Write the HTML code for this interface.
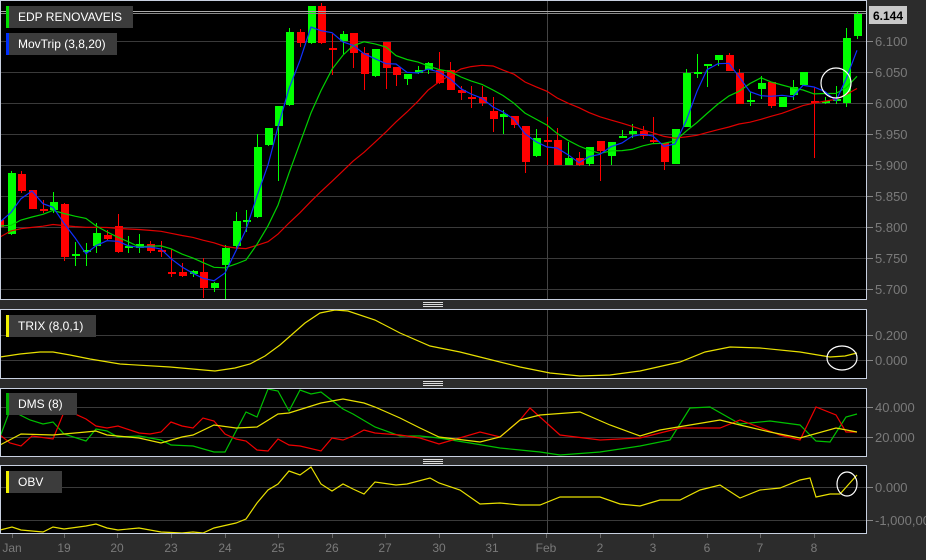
<!DOCTYPE html>
<html><head><meta charset="utf-8"><style>
html,body{margin:0;padding:0;background:#2c2c2c;width:926px;height:560px;overflow:hidden}
svg{display:block;font-family:"Liberation Sans",sans-serif}
</style></head><body>
<svg id="s" width="926" height="560" xmlns="http://www.w3.org/2000/svg">
<rect width="926" height="560" fill="#2c2c2c"/>
<rect x="0" y="0" width="867" height="300" fill="#000"/>
<rect x="0" y="309" width="867" height="69" fill="#000"/>
<rect x="0" y="388" width="867" height="68" fill="#000"/>
<rect x="0" y="465" width="867" height="69" fill="#000"/>
<g id="g"></g>
</svg>
<script>
var g=document.getElementById('g'),h='';
function L(x1,y1,x2,y2,c,w){h+='<line x1="'+x1+'" y1="'+y1+'" x2="'+x2+'" y2="'+y2+'" stroke="'+c+'" stroke-width="'+(w||1)+'"/>';}
function T(x,y,t,c,s,a,wt){h+='<text x="'+x+'" y="'+y+'" fill="'+c+'" font-size="'+s+'" text-anchor="'+(a||'start')+'" font-weight="'+(wt||'normal')+'">'+t+'</text>';}
function P(pts,c){var s='';for(var i=0;i<pts.length;i+=2)s+=pts[i]+','+pts[i+1]+' ';h+='<polyline points="'+s+'" fill="none" stroke="'+c+'" stroke-width="1.2"/>';}
// grids
[41,72,103,134,165,196,227,258,289].forEach(function(y){L(0,y+.5,867,y+.5,'#3a3a3a');});
[335,360].forEach(function(y){L(0,y+.5,867,y+.5,'#3a3a3a');});
[407,437].forEach(function(y){L(0,y+.5,867,y+.5,'#3a3a3a');});
[487,520].forEach(function(y){L(0,y+.5,867,y+.5,'#3a3a3a');});
L(547.5,0,547.5,300,'#444');L(547.5,309,547.5,378,'#444');L(547.5,388,547.5,456,'#444');L(547.5,465,547.5,534,'#444');
// candles: x, open, close, high, low (pixel y)
var C=[[11,234,173,171,235],[21,174,191,171,193],[32,190,209,190,209],[43,209,211,200,213],[53,210,202,192,213],[64,204,257,203,261],[75,256,254,242,266],[86,252,250,243,266],[96,246,233,223,253],[107,235,239,230,240],[118,226,252,214,253],[128,248,246,236,253],[139,248,244,234,253],[150,244,251,241,253],[161,250,252,241,257],[171,272,273,249,277],[182,272,276,263,277],[193,274,271,270,277],[203,272,288,258,298],[214,288,283,282,292],[225,265,248,245,299],[236,246,221,212,250],[246,222,220,210,232],[257,217,147,134,218],[268,145,128,128,146],[278,126,106,106,181],[289,105,32,28,106],[300,32,43,29,47],[311,43,6,6,44],[321,6,43,3,44],[332,48,49,34,75],[343,41,34,31,54],[353,33,53,33,68],[364,53,74,47,90],[375,76,49,49,77],[386,42,68,42,89],[396,67,75,67,86],[407,79,74,74,85],[418,73,70,66,74],[428,70,63,62,74],[439,70,83,52,84],[450,70,90,62,90],[461,90,93,86,100],[471,97,99,86,108],[482,97,103,86,106],[493,111,119,97,132],[503,117,114,110,134],[514,116,125,116,128],[525,126,162,126,173],[536,156,138,129,157],[547,140,141,117,165],[557,140,165,128,165],[568,165,158,142,165],[579,158,165,152,166],[589,164,147,147,166],[600,141,151,141,181],[611,156,142,142,165],[622,137,136,130,138],[632,134,131,124,138],[643,131,136,126,139],[653,140,141,117,143],[664,143,162,143,170],[675,164,129,129,164],[686,127,73,69,127],[697,73,72,54,78],[707,65,64,64,87],[718,60,55,55,66],[729,55,71,53,71],[739,73,104,69,104],[750,102,100,92,106],[761,89,83,76,99],[771,82,106,82,108],[782,107,97,97,107],[793,95,87,80,100],[803,85,72,72,85],[814,101,102,87,158],[825,103,101,97,104],[836,101,99,86,104],[846,103,38,28,107],[857,36,14,11,39]];
h+='<rect x="0" y="220" width="4" height="7" fill="#f00"/>';
C.forEach(function(c){var up=c[2]<=c[1],col=up?'#00ff00':'#ff0000';var t=Math.min(c[1],c[2]),b=Math.max(c[1],c[2]);L(c[0]+.5,c[3],c[0]+.5,c[4],col);h+='<rect x="'+(c[0]-3)+'" y="'+t+'" width="8" height="'+Math.max(2,b-t)+'" fill="'+col+'"/>';});
// MAs
var cl=C.map(function(c){return c[2];}),xs=C.map(function(c){return c[0];});
function ma(n,pre){var a=[],arr=pre.concat(cl),pts=[];for(var i=0;i<cl.length;i++){var s=0,k=i+pre.length;for(var j=0;j<n;j++)s+=arr[k-j];pts.push(xs[i],(s/n).toFixed(1));}return pts;}
var pre=[];for(var i=0;i<20;i++)pre.push(236-i*0.2);
P([0,237].concat(ma(20,pre)),'#e00000');
P([0,226].concat(ma(8,pre)),'#00d000');
P([0,222].concat(ma(3,pre)),'#1030ff');
// circle main
h+='<ellipse cx="836" cy="83" rx="15" ry="15" fill="none" stroke="#fff" stroke-width="1.2"/>';
// price lines top
L(0,11.5,867,11.5,'#aaa');L(0,13.5,867,13.5,'#888');
// TRIX
P([0,357,20,354,40,352,53,352,70,355,90,359,120,364,170,367,215,371,235,368,250,364,265,356,280,345,305,323,320,313,335,310,348,311,375,320,400,333,430,346,460,352,480,357,520,367,550,373,580,376,610,375,640,371,680,362,705,352,730,347,760,348,800,352,830,357,845,356,857,353],'#e8e000');
h+='<ellipse cx="842" cy="358" rx="15" ry="12" fill="none" stroke="#fff" stroke-width="1.2"/>';
// DMS
P([0,437,10,410,30,420,43,424,53,422,64,434,86,441,96,429,107,431,118,437,139,436,161,440,171,445,193,446,214,452,225,452,246,412,257,417,268,389,278,391,289,411,300,390,311,394,321,392,343,409,353,414,375,427,400,436,420,436,439,438,470,443,500,448,520,450,540,452,560,455,600,452,640,446,670,440,690,408,710,407,740,424,770,421,800,425,816,441,830,442,846,417,857,414],'#00c000');
P([0,435,10,443,21,446,32,436,53,439,64,412,75,414,86,419,96,426,107,428,118,426,139,433,150,434,161,432,171,422,182,426,193,428,203,418,214,421,225,434,236,439,246,441,257,450,268,451,278,439,289,445,300,446,321,451,332,438,343,440,353,436,364,430,375,433,400,435,420,438,439,444,480,432,500,437,520,420,530,408,560,435,600,440,640,438,680,428,720,428,740,420,780,435,800,440,816,407,836,415,846,432,857,432],'#f00000');
P([0,445,21,434,53,435,86,432,96,431,107,435,139,438,161,443,182,437,193,435,214,425,236,428,257,427,278,414,289,413,321,403,343,399,364,403,375,407,400,418,420,428,439,437,480,442,500,437,520,420,540,415,580,412,610,425,640,436,660,430,690,425,720,420,740,425,770,432,800,438,836,428,857,432],'#e8e000');
// OBV
P([0,530,12,527,21,530,43,532,53,527,64,529,86,526,96,524,107,528,118,530,139,528,161,532,182,533,193,532,203,533,214,528,236,523,246,519,257,503,268,490,278,484,289,471,300,475,311,467,321,484,332,491,343,484,353,489,364,494,375,482,396,485,407,484,430,478,439,483,460,490,480,504,500,503,520,505,540,505,560,497,600,497,620,504,640,506,660,500,680,500,700,490,720,485,740,498,760,490,780,488,800,480,810,478,816,497,830,494,840,494,857,475],'#e8e000');
h+='<ellipse cx="847" cy="484" rx="10" ry="12" fill="none" stroke="#fff" stroke-width="1.2"/>';
// panel borders
function B(y1,y2){h+='<rect x="0.5" y="'+y1+'.5" width="866" height="'+(y2-y1)+'" fill="none" stroke="#c8d0e0" stroke-width="1"/>';}
B(0,299);B(309,378);B(388,456);B(465,533);
// handles
[302,381,459].forEach(function(y){for(var i=0;i<3;i++)L(423,y+i*2+.5,443,y+i*2+.5,'#ddd');});
// right axis labels
function R(y,t){L(867,y+.5,873,y+.5,'#888');T(875,y+5,t,'#7a7a7a',13);}
[[41,'6.100'],[72,'6.050'],[103,'6.000'],[134,'5.950'],[165,'5.900'],[196,'5.850'],[227,'5.800'],[258,'5.750'],[289,'5.700'],[335,'0.200'],[360,'0.000'],[407,'40.000'],[437,'20.000'],[487,'0.000'],[520,'-1,000,000']].forEach(function(a){R(a[0],a[1]);});
h+='<rect x="869" y="6" width="38" height="18" fill="#c8c8c8"/>';T(888,20,'6.144','#000',12,'middle','bold');
// bottom axis
[['Jan',12],['19',64],['20',117],['23',171],['24',225],['25',278],['26',332],['27',385],['30',439],['31',492],['Feb',546],['2',600],['3',653],['6',707],['7',760],['8',814]].forEach(function(a){L(a[1]+.5,534,a[1]+.5,538,'#666');T(a[1],552,a[0],'#7a7a7a',12,'middle');});
// legends
function G(x,y,w,t,c){h+='<rect x="'+x+'" y="'+y+'" width="'+w+'" height="22" fill="#3c3c3c"/><rect x="'+x+'" y="'+y+'" width="3" height="22" fill="'+c+'"/>';T(x+12,y+15,t,'#fff',12);}
G(6,6,127,'EDP RENOVAVEIS','#00e000');G(6,33,111,'MovTrip (3,8,20)','#0030ff');
G(6,315,90,'TRIX (8,0,1)','#f0f000');G(6,393,71,'DMS (8)','#00b000');G(6,471,56,'OBV','#f0f000');
g.innerHTML=h;
</script>
</body></html>
